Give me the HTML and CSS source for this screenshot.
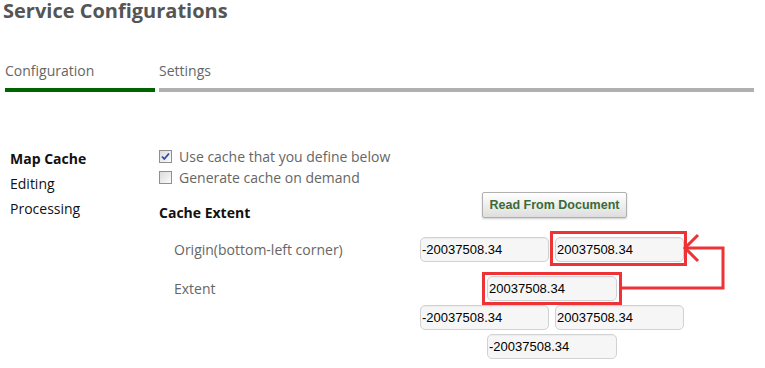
FILE: index.html
```html
<!DOCTYPE html>
<html lang="en">

<head>
  <meta charset="UTF-8">
  <meta name="viewport" content="width=device-width, initial-scale=1.0">
  <title>Service Configurations</title>
  <link rel="stylesheet" href="styles.css">
</head>

<body>
  <div class="page">
    <h1>Service Configurations</h1>

    <!-- Tabs -->
    <div class="tabs">
      <div class="tab active">Configuration</div>
      <div class="tab">Settings</div>
    </div>

    <div class="content">
      <!-- Left menu -->
      <ul class="sideNav">
        <li class="current">Map Cache</li>
        <li>Editing</li>
        <li>Processing</li>
      </ul>

      <div class="panel">
        <label class="checkRow">
          <span class="box">
            <svg width="11" height="11" viewBox="0 0 11 11">
              <path d="M2 5.5 L4.3 8 L9 2.5" fill="none" stroke="#2a4c9a" stroke-width="1.8" />
            </svg>
          </span>
          Use cache that you define below
        </label>
        <label class="checkRow">
          <span class="box"></span>
          Generate cache on demand
        </label>

        <div class="extentHead">
          <h2>Cache Extent</h2>
          <div class="fields">
            <button class="readButton">Read From Document</button>
          </div>
        </div>

        <div class="fieldRow origin">
          <div class="fieldLabel">Origin(bottom-left corner)</div>
          <div class="fields pair">
            <input type="text" value="-20037508.34">
            <input type="text" value="20037508.34">
          </div>
        </div>

        <div class="fieldRow extent">
          <div class="fieldLabel">Extent</div>
          <div class="fields single">
            <input type="text" value="20037508.34">
          </div>
        </div>

        <div class="fieldRow tight">
          <div class="fieldLabel"></div>
          <div class="fields pair">
            <input type="text" value="-20037508.34">
            <input type="text" value="20037508.34">
          </div>
        </div>

        <div class="fieldRow tight">
          <div class="fieldLabel"></div>
          <div class="fields single">
            <input type="text" value="-20037508.34">
          </div>
        </div>
      </div>
    </div>

    <!-- Red annotation drawn on top of the form -->
    <svg class="annotation" width="765" height="368" viewBox="0 0 765 368">
      <g fill="none" stroke="#ee3336" stroke-width="3">
        <rect x="551.5" y="232.5" width="134" height="32" />
        <rect x="483.5" y="273.5" width="137" height="30" />
        <path d="M621 288 H723 V248 H686" />
        <path d="M698 235 L685 248 L698 261" />
      </g>
    </svg>
  </div>
</body>

</html>
```

FILE: styles.css
```css
/* Base */
body {
  margin: 0;
  font-family: 'Open Sans', 'Noto Sans', sans-serif;
  background: #fff;
}

.page {
  position: relative;
  width: 765px;
  height: 368px;
}

/* Title */
h1 {
  margin: 0;
  padding: 2px 0 0 3px;
  font-size: 20px;
  line-height: 18px;
  font-weight: 700;
  color: #555;
}

/* Tabs */
.tabs {
  display: flex;
  gap: 4px;
  margin: 41px 11px 0 5px;
}

.tab {
  font-size: 14px;
  line-height: 20px;
  color: #666;
  padding-bottom: 7px;
  border-bottom: 4px solid #b0b0b0;
  flex: 1;
}

.tab.active {
  flex: 0 0 150px;
  border-bottom-color: #006400;
}

/* Content */
.content {
  display: flex;
  margin-top: 54px;
}

.sideNav {
  list-style: none;
  margin: 0;
  padding: 0 0 0 10px;
  width: 149px;
  font-size: 14px;
  line-height: 25px;
  color: #111;
}

.sideNav .current {
  font-weight: 700;
}

.panel {
  flex: 1;
}

.checkRow {
  display: flex;
  align-items: center;
  gap: 7px;
  height: 21px;
  font-size: 14px;
  color: #666;
}

.box {
  display: flex;
  align-items: center;
  justify-content: center;
  width: 11px;
  height: 11px;
  border: 1px solid #8f8f8f;
  background: linear-gradient(135deg, #dcdcdc, #fbfbfb);
}

/* Cache extent header */
.extentHead {
  display: flex;
  align-items: flex-start;
  margin-top: 4px;
}

h2 {
  margin: 10px 0 0;
  width: 261px;
  font-size: 14px;
  line-height: 21px;
  font-weight: 700;
  color: #111;
}

.fields {
  width: 264px;
}

.readButton {
  margin-left: 62px;
  width: 145px;
  height: 26px;
  border: 1px solid #b0b0b0;
  border-radius: 2px;
  background: linear-gradient(#ffffff, #dedede);
  box-shadow: 0 1px 2px rgba(0, 0, 0, 0.2);
  font-family: 'Liberation Sans', Arial, sans-serif;
  font-size: 12.5px;
  font-weight: 700;
  color: #3b6b35;
  padding: 0;
}

/* Field rows */
.fieldRow {
  display: flex;
  align-items: center;
  height: 25px;
}

.origin {
  margin-top: 14px;
}

.extent {
  margin-top: 14px;
}

.tight {
  margin-top: 4px;
}

.fieldLabel {
  width: 246px;
  padding-left: 15px;
  font-size: 14px;
  color: #666;
}

.pair {
  display: grid;
  grid-template-columns: 129px 129px;
  gap: 6px;
}

.single {
  display: flex;
  justify-content: center;
}

.fields input {
  box-sizing: border-box;
  width: 130px;
  height: 25px;
  padding: 0 1px;
  border: 1px solid #d2d2d2;
  border-radius: 5px;
  background: #f6f6f6;
  box-shadow: inset 0 1px 1px rgba(0, 0, 0, 0.04);
  font-family: 'Liberation Sans', Arial, sans-serif;
  font-size: 13px;
  color: #000;
}

.pair input {
  width: 129px;
}

/* Annotation overlay */
.annotation {
  position: absolute;
  left: 0;
  top: 0;
  pointer-events: none;
}
```
